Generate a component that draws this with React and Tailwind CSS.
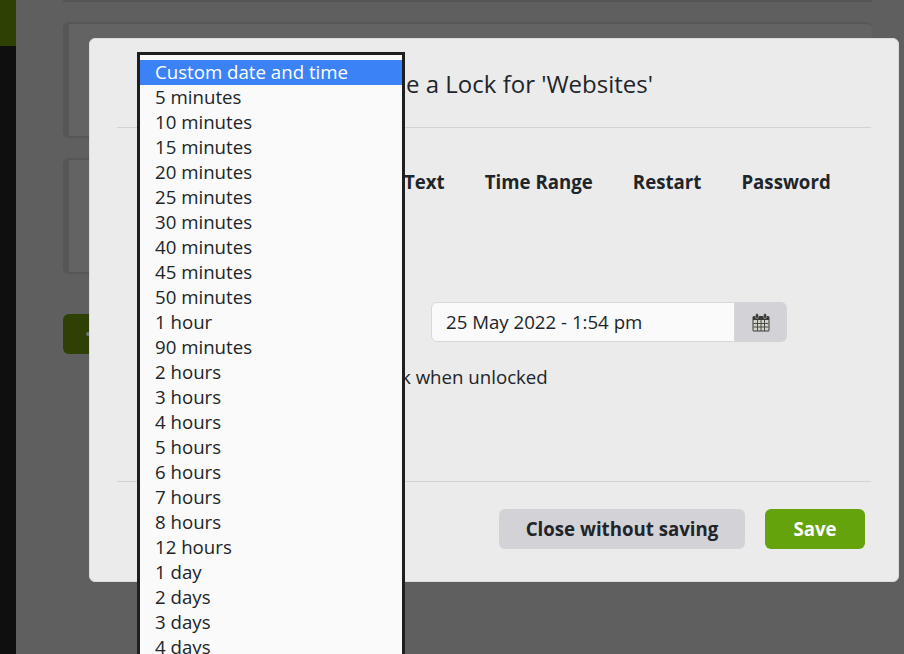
const durations = [
  'Custom date and time', '5 minutes', '10 minutes', '15 minutes', '20 minutes', '25 minutes',
  '30 minutes', '40 minutes', '45 minutes', '50 minutes', '1 hour', '90 minutes', '2 hours',
  '3 hours', '4 hours', '5 hours', '6 hours', '7 hours', '8 hours', '12 hours', '1 day',
  '2 days', '3 days', '4 days',
];

const tabs = ['Text', 'Time Range', 'Restart', 'Password'];

function CalendarIcon() {
  return (
    <svg width="18" height="19" viewBox="0 0 18 19" fill="none">
      <rect x="0.5" y="3" width="17" height="15.5" rx="1.5" fill="#3a3a36" />
      <rect x="1.5" y="7" width="15" height="10.5" fill="#d2d3c6" />
      <path d="M5.5 7v11M9 7v11M12.5 7v11M1.5 10.5h15M1.5 14h15" stroke="#4a4a46" strokeWidth="1" />
      <rect x="3.5" y="0.5" width="3" height="5" rx="1.5" fill="#3a3a36" stroke="#d3d2d7" strokeWidth="0.5" />
      <rect x="11.5" y="0.5" width="3" height="5" rx="1.5" fill="#3a3a36" stroke="#d3d2d7" strokeWidth="0.5" />
    </svg>
  );
}

function Backdrop() {
  return (
    <div className="flex h-[654px] overflow-hidden bg-[#5f5f5f]">
      <div className="w-4 shrink-0 bg-[#0f0f0f]">
        <div className="h-[46px] bg-[#2e4003]" />
      </div>
      <div className="flex flex-1 flex-col pl-[47px] pr-8">
        <div className="h-0.5 bg-[#555555]" />
        <div className="mt-5 h-[116px] rounded-md border-l-[6px] border-t-2 border-b-2 border-[#565656] bg-[#636363]" />
        <div className="mt-5 h-[116px] rounded-md border-l-[6px] border-t-2 border-b-2 border-[#565656] bg-[#636363]" />
        <div className="mt-10 flex h-10 w-[120px] items-center rounded-md bg-[#2e4003] pl-[23px]">
          <span className="size-1 rounded-full bg-[#6b7280]" />
        </div>
      </div>
    </div>
  );
}

function DurationList() {
  return (
    <div className="absolute left-[47px] top-[13px] h-[641px] w-[268px] overflow-hidden border-[3px] border-[#1f1f1f] bg-[#fafafa] pt-[5px]">
      {durations.map((label, i) => (
        <div
          key={label}
          className={`h-[25px] pl-[15px] text-[18.67px] leading-[23px] whitespace-nowrap ${
            i === 0 ? 'bg-[#3b82f6] text-white' : 'text-[#212529]'
          }`}
        >
          {label}
        </div>
      ))}
    </div>
  );
}

export default function App() {
  return (
    <div className="relative h-[654px] overflow-hidden font-['Open_Sans',sans-serif] text-[#212529]">
      <Backdrop />

      <div className="absolute left-[89px] top-[38px] flex h-[544px] w-[810px] flex-col rounded-md border border-[#dcdcdc] bg-[#ebebeb] px-[27px]">
        <div className="flex h-[89px] items-center justify-end border-b border-[#d3d3d3] pr-[218px] pt-px text-[24px]">
          e a Lock for 'Websites'
        </div>

        <div className="flex gap-10 pl-[287px] pt-[41px] text-[18.67px] font-bold leading-[26px]">
          {tabs.map((tab) => (
            <span key={tab}>{tab}</span>
          ))}
        </div>

        <div className="ml-[314px] mt-[107px] flex h-10 w-[356px]">
          <div className="flex flex-1 items-center rounded-l-md border border-[#d8d8d8] bg-[#fafafa] pl-[14px] text-[18.67px]">
            25 May 2022 - 1:54 pm
          </div>
          <div className="flex w-[52px] items-center justify-center rounded-r-md bg-[#d3d2d7]">
            <CalendarIcon />
          </div>
        </div>

        <div className="ml-[284px] mt-[22px] text-[18.67px] leading-[25px]">k when unlocked</div>

        <div className="mt-[92px] flex h-[100px] justify-end gap-5 border-t border-[#d3d3d3] pr-1.5 pt-[27px]">
          <button className="h-10 w-[246px] rounded-md bg-[#d3d2d7] text-[18.67px] font-bold">Close without saving</button>
          <button className="h-10 w-[100px] rounded-md bg-[#65a30d] text-[18.67px] font-bold text-white">Save</button>
        </div>

        <DurationList />
      </div>
    </div>
  );
}
